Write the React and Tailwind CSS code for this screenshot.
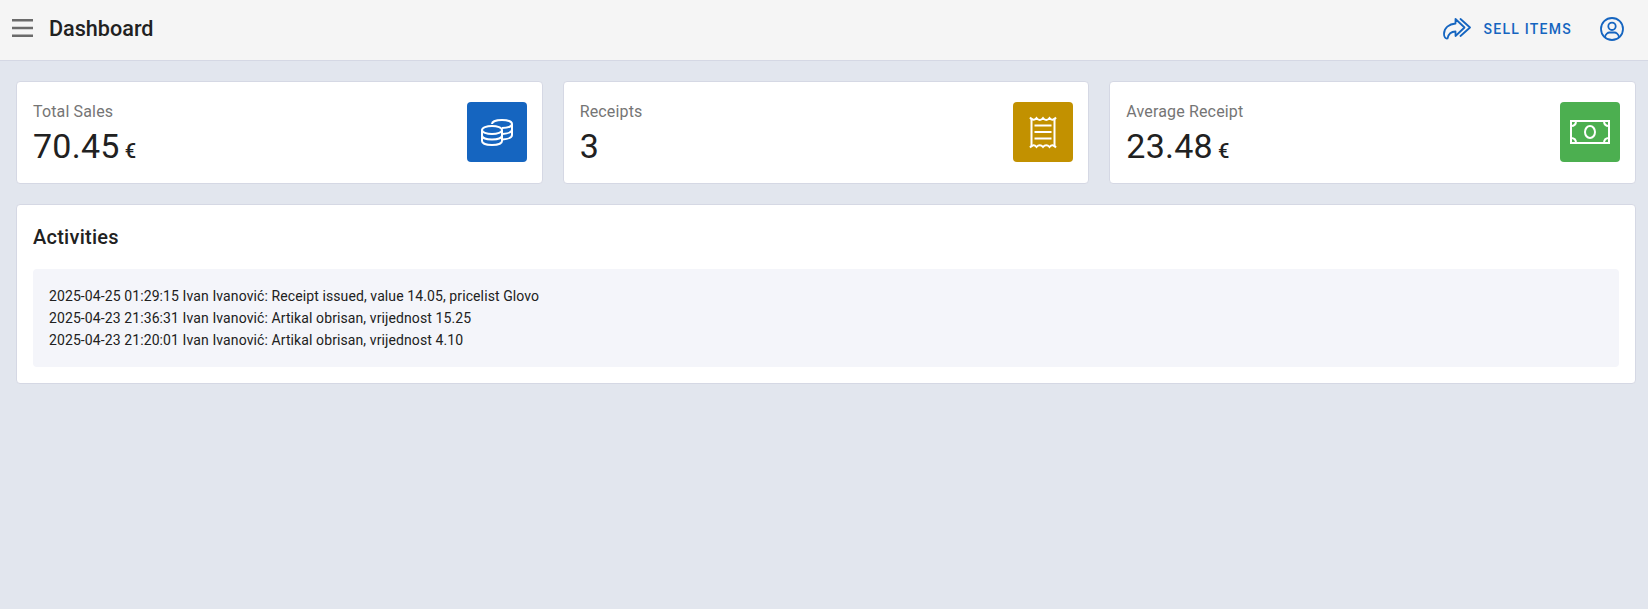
const font = { fontFamily: 'Roboto, sans-serif' };

function MenuIcon() {
  return (
    <svg width="21" height="18" viewBox="0 0 21 18" fill="none" stroke="#6b6b6b" strokeWidth="2.4">
      <path d="M0 1.2H21M0 9H21M0 16.8H21" />
    </svg>
  );
}

function SellIcon() {
  return (
    <svg width="28" height="22" viewBox="0 0 28 22" fill="none" stroke="#1565c0" strokeWidth="1.8" strokeLinejoin="round" strokeLinecap="round">
      <path d="M12.5 1L21.5 9.5L12.5 18V13.5C8 13.5 5.5 15.5 4.5 20.5C2.5 21 1 19 1 16C1 10 6 6 12.5 5.5V1Z" />
      <path d="M17.5 1L27 9.5L17.5 18" />
    </svg>
  );
}

function UserIcon() {
  return (
    <svg width="24" height="24" viewBox="0 0 24 24" fill="none" stroke="#1565c0" strokeWidth="1.8">
      <circle cx="12" cy="12" r="11" />
      <circle cx="12" cy="9.3" r="3.7" />
      <path d="M5 20C5.5 17 8 15.5 9.5 15.5H14.5C16 15.5 18.5 17 19 20" />
    </svg>
  );
}

function CoinsIcon() {
  return (
    <svg width="32" height="27" viewBox="0 0 32 27" fill="none" stroke="#fff" strokeWidth="2">
      <ellipse cx="11" cy="11" rx="10" ry="4" />
      <path d="M1 11V22C1 24.5 5.5 26 11 26S21 24.5 21 22V11" />
      <path d="M1 16.5C1 19 5.5 20.5 11 20.5S21 19 21 16.5" />
      <path d="M11 5C11 2.5 15.5 1 21 1S31 2.5 31 5V16C31 18.5 27 20 21.5 20.5" />
      <path d="M31 5C31 7.5 26.5 9 21 9M31 10.5C31 13 27 14.5 21.5 15" />
    </svg>
  );
}

function ReceiptIcon() {
  return (
    <svg width="28" height="33" viewBox="0 0 28 33" fill="none" stroke="#fff" strokeWidth="2">
      <path d="M1 1.5C3.5 4.5 5.5 4.5 7.5 2C9.5 4.5 12 4.5 14 2C16 4.5 18.5 4.5 20.5 2C22.5 4.5 24.5 4.5 27 1.5" />
      <path d="M1 31.5C3.5 28.5 5.5 28.5 7.5 31C9.5 28.5 12 28.5 14 31C16 28.5 18.5 28.5 20.5 31C22.5 28.5 24.5 28.5 27 31.5" />
      <path d="M2.5 2V31M25.5 2V31" />
      <path d="M5.5 9.5H22.5M5.5 16H22.5M5.5 22.5H22.5" />
    </svg>
  );
}

function MoneyIcon() {
  return (
    <svg width="40" height="24" viewBox="0 0 40 24" fill="none" stroke="#fff" strokeWidth="2">
      <rect x="1" y="1" width="38" height="22" />
      <ellipse cx="20" cy="12" rx="5" ry="6" />
      <path d="M1 6C4 6 6 4 6 1M39 6C36 6 34 4 34 1M1 18C4 18 6 20 6 23M39 18C36 18 34 20 34 23" />
    </svg>
  );
}

function StatCard({ label, value, unit, tile, children }) {
  return (
    <div className="flex justify-between rounded border border-[#d5d8e4] bg-white pb-[21px] pl-4 pr-[15px] pt-5">
      <div className="h-[60px]">
        <div className="mt-[2px] text-base leading-4 tracking-[0.15px] text-[#757575]">{label}</div>
        <div className="mt-[6px] text-[34px] leading-10 tracking-[0.25px] text-[#212121]">
          {value}
          {unit && <span className="ml-[5px] text-[20px] font-medium">{unit}</span>}
        </div>
      </div>
      <div className={`flex h-[60px] w-[60px] items-center justify-center rounded ${tile}`}>{children}</div>
    </div>
  );
}

const activities = [
  '2025-04-25 01:29:15 Ivan Ivanović: Receipt issued, value 14.05, pricelist Glovo',
  '2025-04-23 21:36:31 Ivan Ivanović: Artikal obrisan, vrijednost 15.25',
  '2025-04-23 21:20:01 Ivan Ivanović: Artikal obrisan, vrijednost 4.10',
];

export default function App() {
  return (
    <div className="min-h-[609px] bg-[#e2e6ee]" style={font}>
      <header className="flex h-[61px] items-center justify-between border-b border-[#d5d8e4] bg-[#f5f5f5] pb-[3px] pl-3 pr-6">
        <div className="flex items-center gap-4">
          <MenuIcon />
          <h1 className="pt-[2px] text-[21.6px] font-medium text-[#212121]">Dashboard</h1>
        </div>
        <div className="flex items-center gap-[28px]">
          <div className="flex items-center gap-[13px]">
            <SellIcon />
            <span className="text-sm font-medium tracking-[1.25px] text-[#1565c0]">SELL ITEMS</span>
          </div>
          <UserIcon />
        </div>
      </header>
      <main className="flex flex-col gap-5 pl-4 pr-3 pt-5">
        <div className="grid grid-cols-3 gap-5">
          <StatCard label="Total Sales" value="70.45" unit="€" tile="bg-[#1565c0]">
            <CoinsIcon />
          </StatCard>
          <StatCard label="Receipts" value="3" tile="bg-[#c29100]">
            <ReceiptIcon />
          </StatCard>
          <StatCard label="Average Receipt" value="23.48" unit="€" tile="bg-[#4caf50]">
            <MoneyIcon />
          </StatCard>
        </div>
        <section className="rounded border border-[#d5d8e4] bg-white px-4 pb-4 pt-5">
          <h2 className="text-[20px] font-medium leading-6 tracking-[0.25px] text-[#212121]">Activities</h2>
          <div className="mt-[20px] rounded bg-[#f4f5fa] px-4 py-4 text-sm leading-[22px] tracking-[0.1px] text-[#212121]">
            {activities.map((a) => (
              <div key={a}>{a}</div>
            ))}
          </div>
        </section>
      </main>
    </div>
  );
}
